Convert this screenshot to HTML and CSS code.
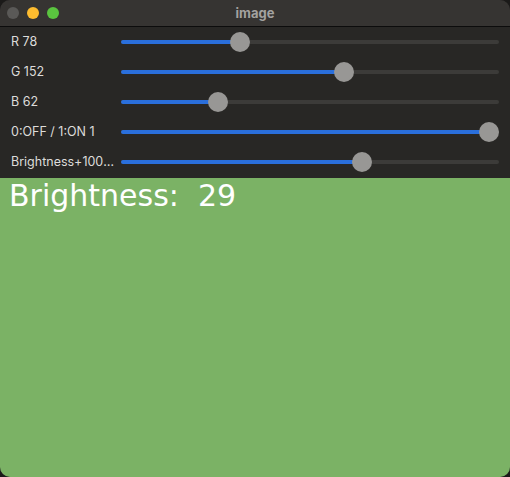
FILE: index.html
```html
<!DOCTYPE html>
<html>
<head>
<meta charset="utf-8">
<link rel="stylesheet" href="styles.css">
</head>
<body>
<div class="window">
  <div class="titlebar">
    <div class="lights">
      <span class="light grey"></span>
      <span class="light yellow"></span>
      <span class="light green"></span>
    </div>
    <div class="title">image</div>
  </div>
  <div class="panel">
    <div class="row">
      <div class="label">R 78</div>
      <div class="track"><div class="fill" style="width:119px"></div><div class="knob" style="left:119px"></div></div>
    </div>
    <div class="row">
      <div class="label">G 152</div>
      <div class="track"><div class="fill" style="width:223px"></div><div class="knob" style="left:223px"></div></div>
    </div>
    <div class="row">
      <div class="label">B 62</div>
      <div class="track"><div class="fill" style="width:97px"></div><div class="knob" style="left:97px"></div></div>
    </div>
    <div class="row">
      <div class="label">0:OFF / 1:ON 1</div>
      <div class="track"><div class="fill" style="width:368px"></div><div class="knob" style="left:368px"></div></div>
    </div>
    <div class="row">
      <div class="label">Brightness+100 29</div>
      <div class="track"><div class="fill" style="width:241px"></div><div class="knob" style="left:241px"></div></div>
    </div>
  </div>
  <div class="image">
    <div class="caption">Brightness:&nbsp; 29</div>
  </div>
</div>
</body>
</html>
```

FILE: styles.css
```css
html, body {
  margin: 0;
  padding: 0;
  background: #1b1a19;
}
.window {
  width: 510px;
  height: 477px;
  border-radius: 10px;
  overflow: hidden;
  display: flex;
  flex-direction: column;
  background: #282725;
}
.titlebar {
  height: 26px;
  border-bottom: 1px solid #0c0c0c;
  background: #363432;
  position: relative;
  display: flex;
  align-items: center;
  justify-content: center;
  flex-shrink: 0;
}
.lights {
  position: absolute;
  left: 7px;
  top: 7px;
  display: flex;
  gap: 8px;
}
.light {
  width: 12px;
  height: 12px;
  border-radius: 50%;
  display: block;
}
.light.grey { background: #5a5957; }
.light.yellow { background: #fdbc2f; }
.light.green { background: #5ac43f; }
.title {
  font-family: "Inter", "Liberation Sans", sans-serif;
  font-weight: 700;
  font-size: 13px;
  color: #a3a2a0;
  margin-top: -1px;
}
.panel {
  display: flex;
  flex-direction: column;
  padding-bottom: 1px;
  flex-shrink: 0;
}
.row {
  height: 30px;
  display: flex;
  align-items: center;
}
.label {
  width: 104px;
  padding-left: 11px;
  padding-right: 6px;
  font-family: "Inter", "Liberation Sans", sans-serif;
  font-size: 12.5px;
  color: #dddcda;
  white-space: nowrap;
  overflow: hidden;
  text-overflow: ellipsis;
  margin-top: -2px;
}
.track {
  position: relative;
  width: 378px;
  height: 4px;
  border-radius: 2px;
  background: #3c3b39;
}
.fill {
  height: 4px;
  border-radius: 2px;
  background: #2a6fdc;
}
.knob {
  position: absolute;
  top: -8px;
  width: 20px;
  height: 20px;
  margin-left: -10px;
  border-radius: 50%;
  background: #989795;
}
.image {
  flex: 1;
  background: #7bb265;
}
.caption {
  font-family: "DejaVu Sans", sans-serif;
  font-size: 30px;
  color: #ffffff;
  padding-left: 9px;
  padding-top: 1px;
  line-height: 34px;
}
```
